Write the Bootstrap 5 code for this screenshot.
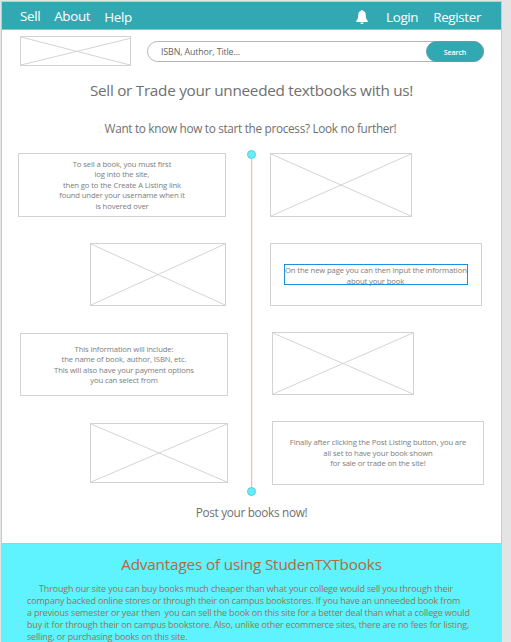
<!DOCTYPE html>
<html lang="en">
<head>
<meta charset="utf-8">
<meta name="viewport" content="width=device-width, initial-scale=1">
<title>StudenTXTbooks</title>
<link href="https://cdn.jsdelivr.net/npm/bootstrap@5.3.0/dist/css/bootstrap.min.css" rel="stylesheet">
<style>
  html, body { height: 642px; overflow: hidden; }
  body { background: #e4e4e4; font-family: "Open Sans", "Noto Sans", sans-serif; color: #707070; }
  .page { width: 501px; height: 641px; margin-top: 1px; margin-left: 1px; background: #fff; border: solid #c9c9c9; border-width: 1px 1px 0 1px; }
  .topbar { height: 28px; background: #32a8b3; border-bottom: 1px solid #a5babc; padding: 0 20px 0 18px; font-size: 13.4px; letter-spacing: -.35px; line-height: 18px; }
  .topbar a { color: #fff; text-decoration: none; white-space: nowrap; }
  .low { margin-top: 2px; }
  .about { margin-left: 14px; }
  .help { margin-left: 14px; }
  .bell { margin: 3px 18px 0 0; }
  .register { margin-left: 15px; }
  .search-row { height: 32px; margin: 6px 17px 0 18px; }
  .wire { display: block; border: 1px solid #d2d2d2; }
  .wire line { stroke: #d4d4d4; stroke-width: 1; vector-effect: non-scaling-stroke; }
  .logo { width: 111px; height: 30px; }
  .search { width: 337px; height: 21px; margin-top: 5px; border: 1px solid #b5b5b5; border-radius: 11px; }
  .search span { font-size: 8.9px; letter-spacing: -.14px; padding: 1px 0 0 13px; color: #666; }
  .search button { width: 58px; height: 21px; margin: -1px; border: 1px solid #5f9ea5; border-radius: 11px; background: #32a8b3; color: #fff; font-size: 7.2px; font-weight: 600; letter-spacing: -.15px; line-height: 19px; padding: 1px 0 0; }
  h1, h2, h3, p { margin: 0; white-space: nowrap; }
  h1 { font-size: 15.3px; letter-spacing: -.28px; line-height: 22px; font-weight: 400; margin-top: 11px; }
  h2 { font-size: 11.8px; letter-spacing: -.32px; line-height: 18px; font-weight: 400; }
  .lookline { margin-top: 18px; margin-right: 2px; }
  .postline { margin-top: 11px; }
  .steps { height: 339px; margin-top: 16px; }
  .left-col { width: 226px; }
  .right-col { width: 230px; }
  .step { border: 1px solid #d2d2d2; font-size: 7.7px; letter-spacing: -.13px; line-height: 10.5px; text-align: center; color: #7d7d7d; white-space: nowrap; }
  .rail { width: 9px; height: 346px; margin: -3px 14px 0 19px; }
  .dot { width: 9px; height: 9px; border-radius: 50%; background: #5ff0fc; border: 1px solid #69c5d5; }
  .stem { width: 2px; margin-left: 4px; background: linear-gradient(90deg, #f9bfa4 50%, #fdeee4 50%); }
  .picked { border: 1px solid #1c8fe0; width: 184px; height: 21px; line-height: 10.5px; padding-right: 1px; }
  .s1 { width: 208px; height: 64px; margin-left: 16px; }
  .w2 { width: 136px; height: 63px; margin: 26px 0 0 88px; }
  .s3 { width: 208px; height: 63px; margin: 27px 0 0 18px; }
  .w4 { width: 138px; height: 60px; margin: 27px 0 0 88px; }
  .w1 { width: 142px; height: 64px; }
  .s2 { width: 212px; height: 63px; margin-top: 26px; }
  .w3 { width: 142px; height: 63px; margin: 26px 0 0 2px; }
  .s4 { width: 212px; height: 64px; margin: 26px 0 0 2px; }
  .advantages { height: 99px; margin-top: 22px; background: #5ff2ff; border-top: 1px solid #9fcfd4; color: #a8703f; }
  .advantages h3 { font-size: 15.3px; letter-spacing: -.17px; line-height: 22px; font-weight: 400; text-align: center; margin-top: 9px; color: #b5693c; }
  .advantages p { font-size: 9px; letter-spacing: -.165px; line-height: 12px; margin: 8px 0 0 25px; white-space: pre; }
  .indent { padding-left: 12px; }
</style>
</head>
<body>
<div class="page">
  <nav class="topbar d-flex align-items-center">
    <a href="#">Sell</a><a href="#" class="about">About</a><a href="#" class="help low">Help</a>
    <svg class="ms-auto bell" width="12" height="14" viewBox="0 0 12 14"><path fill="#fff" d="M6 0c.7 0 1.100.4 1.200 1.100C9 1.700 9.800 3.200 9.800 5.200c0 2.800.5 4.200 1.900 5.500V12H.3v-1.300c1.400-1.300 1.900-2.700 1.900-5.500 0-2 .8-3.500 2.600-4.100C4.900.4 5.300 0 6 0ZM4.400 12.400h3.200c-.1 1-.7 1.500-1.600 1.500s-1.500-.5-1.600-1.500Z"/></svg>
    <a href="#" class="login low">Login</a><a href="#" class="register low">Register</a>
  </nav>
  <div class="search-row d-flex justify-content-between">
    <svg class="wire logo" viewBox="0 0 100 100" preserveAspectRatio="none"><line x1="0" y1="0" x2="100" y2="100"/><line x1="0" y1="100" x2="100" y2="5"/></svg>
    <div class="search d-flex justify-content-between align-items-center"><span>ISBN, Author, Title...</span><button type="button">Search</button></div>
  </div>
  <h1 class="text-center">Sell or Trade your unneeded textbooks with us!</h1>
  <h2 class="text-center lookline">Want to know how to start the process? Look no further!</h2>
  <div class="steps d-flex">
    <div class="left-col d-flex flex-column">
      <div class="step s1 d-flex align-items-center justify-content-center"><div>To sell a book, you must first<br>log into the site,<br>then go to the Create A Listing link<br>found under your username when it<br>is hovered over</div></div>
      <svg class="wire w2" viewBox="0 0 100 100" preserveAspectRatio="none"><line x1="0" y1="0" x2="100" y2="100"/><line x1="0" y1="100" x2="100" y2="0"/></svg>
      <div class="step s3 d-flex align-items-center justify-content-center"><div>This information will include:<br>the name of book, author, ISBN, etc.<br>This will also have your payment options<br>you can select from</div></div>
      <svg class="wire w4" viewBox="0 0 100 100" preserveAspectRatio="none"><line x1="0" y1="0" x2="100" y2="100"/><line x1="0" y1="100" x2="100" y2="0"/></svg>
    </div>
    <div class="rail d-flex flex-column"><div class="dot"></div><div class="stem flex-grow-1"></div><div class="dot"></div></div>
    <div class="right-col d-flex flex-column">
      <svg class="wire w1" viewBox="0 0 100 100" preserveAspectRatio="none"><line x1="0" y1="0" x2="100" y2="100"/><line x1="0" y1="100" x2="100" y2="0"/></svg>
      <div class="step s2 d-flex align-items-center justify-content-center"><div class="picked">On the new page you can then input the information<br>about your book</div></div>
      <svg class="wire w3" viewBox="0 0 100 100" preserveAspectRatio="none"><line x1="0" y1="0" x2="100" y2="100"/><line x1="0" y1="100" x2="100" y2="0"/></svg>
      <div class="step s4 d-flex align-items-center justify-content-center"><div>Finally after clicking the Post Listing button, you are<br>all set to have your book shown<br>for sale or trade on the site!</div></div>
    </div>
  </div>
  <h2 class="text-center postline">Post your books now!</h2>
  <section class="advantages">
    <h3>Advantages of using StudenTXTbooks</h3>
    <p><span class="indent">Through our site you can buy books much cheaper than what your college would sell you through their</span>
company backed online stores or through their on campus bookstores. If you have an unneeded book from
a previous semester or year then  you can sell the book on this site for a better deal than what a college would
buy it for through their on campus bookstore. Also, unlike other ecommerce sites, there are no fees for listing,
selling, or purchasing books on this site.</p>
  </section>
</div>
<script src="https://cdn.jsdelivr.net/npm/bootstrap@5.3.0/dist/js/bootstrap.bundle.min.js"></script>
</body>
</html>
